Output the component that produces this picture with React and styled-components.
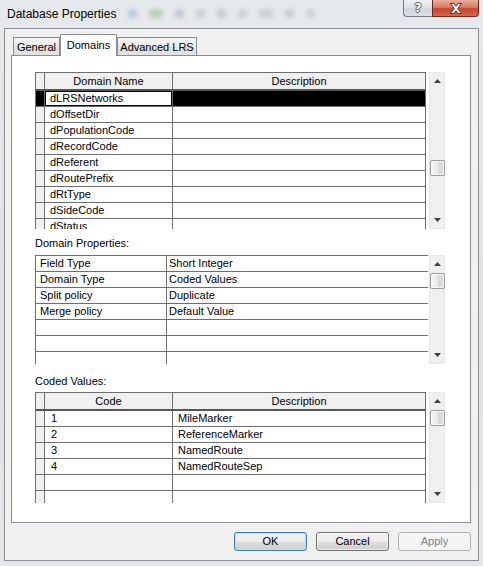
import React from 'react';
import styled, { createGlobalStyle, css } from 'styled-components';

const LINE = '#6e6e6e';

const Global = createGlobalStyle`
  html, body { margin: 0; padding: 0; }
  body {
    width: 483px; height: 566px; overflow: hidden;
    font-family: "Liberation Sans", Arial, sans-serif;
    background: #e2e6ea;
  }
`;

const Window = styled.div`
  width: 483px; height: 566px; box-sizing: border-box;
  display: flex; flex-direction: column;
  background: linear-gradient(180deg, #e6e9ec 0%, #dde2e7 60%, #e4e7ea 100%);
`;

const TitleBar = styled.div`
  height: 28px; flex: none; display: flex; align-items: flex-start;
  padding: 0 4px 0 7px; box-sizing: border-box;
`;

const Title = styled.div`
  font-size: 12px; line-height: 14px; padding-top: 7px; color: #000;
  white-space: nowrap;
`;

const Blurs = styled.div`
  flex: 1; display: flex; align-items: center; gap: 12px;
  padding: 9px 0 0 12px; opacity: 0.35; filter: blur(2px);
`;

const Blob = styled.span`
  width: ${p => p.$w || 9}px; height: 9px; border-radius: 3px;
  background: ${p => p.$c};
`;

const Caption = styled.div`
  display: flex; flex: none;
`;

const CapButton = styled.div`
  box-sizing: border-box; height: 17px; display: flex; align-items: center; justify-content: center;
  border: 1px solid;
  border-top: none;
  ${p => p.$close ? css`
    width: 47px; border-color: #6e2a1f; border-bottom-right-radius: 4px;
    background: linear-gradient(180deg, #eab0a0 0%, #dd7b63 45%, #c8452a 55%, #d36a4e 100%);
  ` : css`
    width: 29px; border-color: #6f7b88; border-right: none; border-bottom-left-radius: 4px;
    background: linear-gradient(180deg, #edf1f5 0%, #dde3e9 45%, #cdd5dd 55%, #d9e0e7 100%);
  `}
`;

const HelpGlyph = styled.span`
  font: bold 12px/12px "DejaVu Sans", sans-serif; color: #fff;
  text-shadow: 1px 0 0 #556, -1px 0 0 #556, 0 1px 0 #556, 0 -1px 0 #556;
`;

const Client = styled.div`
  flex: none; margin: 0 4px; height: 533px; box-sizing: border-box;
  border: 1px solid #8c9096; background: #f0f0f0;
  padding: 5px 7px 9px 6px;
  display: flex; flex-direction: column;
`;

const TabStrip = styled.div`
  height: 21px; display: flex; align-items: flex-end; padding-left: 2px; flex: none;
`;

const Tab = styled.div`
  box-sizing: border-box; width: ${p => p.$w}px;
  border: 1px solid #898c95; border-bottom: none;
  font-size: 11px; color: #000; display: flex; justify-content: center; align-items: center;
  white-space: nowrap;
  ${p => p.$active ? css`
    height: 22px; margin-bottom: -1px; background: #fff; position: relative; z-index: 1;
    padding-bottom: 2px; border-radius: 2px 2px 0 0;
  ` : css`
    height: 18px; background: linear-gradient(180deg, #f3f3f3 0%, #ebebeb 50%, #dedede 51%, #e3e3e3 100%);
  `}
`;

const Panel = styled.div`
  height: 468px; box-sizing: border-box; flex: none;
  border: 1px solid #898c95; background: #fff;
  padding: 16px 0 0 23px;
  display: flex; flex-direction: column;
`;

const GridArea = styled.div`
  width: 410px; height: ${p => p.$h}px; flex: none;
  display: flex; justify-content: space-between;
`;

const Grid = styled.div`
  box-sizing: border-box; width: ${p => p.$w}px; height: 100%; overflow: hidden;
  border-left: 1px solid ${LINE}; border-top: 1px solid ${LINE}; background: #fff;
`;

const GridLine = styled.div`
  display: grid; grid-template-columns: ${p => p.$cols};
  height: ${p => p.$h || 16}px;
`;

const Cell = styled.div`
  box-sizing: border-box; min-width: 0;
  border-right: ${p => p.$noRight ? 'none' : `1px solid ${LINE}`};
  border-bottom: 1px solid ${LINE};
  font-size: 11px; line-height: 15px; color: #000;
  padding-left: ${p => p.$pad ?? 5}px;
  white-space: nowrap; overflow: hidden;
  ${p => p.$selected && css`background: #000;`}
  ${p => p.$focus && css`box-shadow: inset 0 0 0 1px #000;`}
`;

const HeadCell = styled.div`
  box-sizing: border-box; min-width: 0;
  border-right: 1px solid ${LINE}; border-bottom: 2px solid #555;
  background: #f0f0f0;
  font-size: 11px; line-height: 16px; text-align: center; color: #000;
  white-space: nowrap; overflow: hidden;
`;

const RowHead = styled.div`
  box-sizing: border-box;
  border-right: 1px solid ${LINE}; border-bottom: 1px solid ${LINE};
  background: ${p => p.$selected ? '#000' : '#f0f0f0'};
`;

const Label = styled.div`
  font-size: 11px; line-height: 13px; color: #000;
  padding-top: ${p => p.$top}px; padding-bottom: ${p => p.$bottom}px; flex: none;
`;

const Scroll = styled.div`
  box-sizing: border-box; width: 16px; height: 100%;
  background: #efefef; border: 1px solid #e6e6e6;
  display: flex; flex-direction: column;
`;

const ArrowBox = styled.div`
  height: 16px; flex: none; display: flex; align-items: center; justify-content: center;
`;

const Track = styled.div`
  flex: 1; display: flex; flex-direction: column; align-items: center;
`;

const Thumb = styled.div`
  box-sizing: border-box; width: 15px; height: 16px; flex: none;
  margin-top: ${p => p.$offset}px;
  border: 1px solid #9b9b9b; border-radius: 2px;
  background: linear-gradient(90deg, #f5f5f5 0%, #e9e9e9 50%, #d9d9d9 51%, #dcdcdc 100%);
  box-shadow: inset 0 0 0 1px rgba(255,255,255,0.7);
`;

const ButtonRow = styled.div`
  display: flex; justify-content: flex-end; gap: 9px; margin-top: 9px; flex: none;
`;

const Button = styled.button`
  box-sizing: border-box; width: 73px; height: 19px; padding: 0;
  font: 11px/15px "Liberation Sans", Arial, sans-serif; color: #000;
  border: 1px solid #707070; border-radius: 3px;
  background: linear-gradient(180deg, #f2f2f2 0%, #ebebeb 50%, #dddddd 51%, #cfcfcf 100%);
  box-shadow: inset 0 0 0 1px rgba(255,255,255,0.6);
  ${p => p.$default && css`
    border-color: #3c7fb1;
    box-shadow: inset 0 0 0 1px #b7e0f7;
  `}
  ${p => p.$disabled && css`
    border-color: #adb2b5; color: #838383; background: #f4f4f4; box-shadow: none;
  `}
`;

const Arrow = ({ down }) => (
  <svg width="7" height="4" viewBox="0 0 7 4">
    <polygon points={down ? '0,0 7,0 3.5,4' : '3.5,0 7,4 0,4'} fill="#3e3e3e" />
  </svg>
);

const ScrollBar = ({ offset }) => (
  <Scroll>
    <ArrowBox><Arrow /></ArrowBox>
    <Track><Thumb $offset={offset} /></Track>
    <ArrowBox><Arrow down /></ArrowBox>
  </Scroll>
);

const CloseIcon = () => (
  <svg width="14" height="11" viewBox="0 0 14 11">
    <path d="M1.5 0.5 H4.8 L7 3.2 L9.2 0.5 H12.5 L8.8 5.5 L12.5 10.5 H9.2 L7 7.8 L4.8 10.5 H1.5 L5.2 5.5 Z"
      fill="#fff" stroke="#5a2a22" strokeWidth="1" strokeLinejoin="round" />
  </svg>
);

const DOMAIN_COLS = '9px 128px 1fr';
const domains = ['dLRSNetworks', 'dOffsetDir', 'dPopulationCode', 'dRecordCode', 'dReferent', 'dRoutePrefix', 'dRtType', 'dSideCode', 'dStatus'];
const props = [
  ['Field Type', 'Short Integer'],
  ['Domain Type', 'Coded Values'],
  ['Split policy', 'Duplicate'],
  ['Merge policy', 'Default Value'],
  ['', ''], ['', ''], ['', ''],
];
const coded = [['1', 'MileMarker'], ['2', 'ReferenceMarker'], ['3', 'NamedRoute'], ['4', 'NamedRouteSep'], ['', ''], ['', '']];

export default function App() {
  return (
    <>
      <Global />
      <Window>
        <TitleBar>
          <Title>Database Properties</Title>
          <Blurs>
            <Blob $c="#5b8fc9" /><Blob $c="#6aa35a" $w={14} /><Blob $c="#7a8aa0" />
            <Blob $c="#9aa4ae" /><Blob $c="#8b96a2" /><Blob $c="#a0a8b0" />
            <Blob $c="#9aa2aa" $w={14} /><Blob $c="#8f99a3" /><Blob $c="#a3abb3" />
          </Blurs>
          <Caption>
            <CapButton><HelpGlyph>?</HelpGlyph></CapButton>
            <CapButton $close><CloseIcon /></CapButton>
          </Caption>
        </TitleBar>
        <Client>
          <TabStrip>
            <Tab $w={47}>General</Tab>
            <Tab $w={57} $active>Domains</Tab>
            <Tab $w={80}>Advanced LRS</Tab>
          </TabStrip>
          <Panel>
            <GridArea $h={157}>
              <Grid $w={391}>
                <GridLine $cols={DOMAIN_COLS} $h={18}>
                  <HeadCell />
                  <HeadCell>Domain Name</HeadCell>
                  <HeadCell>Description</HeadCell>
                </GridLine>
                {domains.map((d, i) => (
                  <GridLine key={d} $cols={DOMAIN_COLS}>
                    <RowHead $selected={i === 0} />
                    <Cell $focus={i === 0}>{d}</Cell>
                    <Cell $selected={i === 0} />
                  </GridLine>
                ))}
              </Grid>
              <ScrollBar offset={71} />
            </GridArea>

            <Label $top={8} $bottom={5}>Domain Properties:</Label>
            <GridArea $h={109}>
              <Grid $w={393}>
                {props.map(([k, v], i) => (
                  <GridLine key={i} $cols="131px 1fr">
                    <Cell $pad={4}>{k}</Cell>
                    <Cell $pad={2} $noRight>{v}</Cell>
                  </GridLine>
                ))}
              </Grid>
              <ScrollBar offset={1} />
            </GridArea>

            <Label $top={11} $bottom={4}>Coded Values:</Label>
            <GridArea $h={111}>
              <Grid $w={391}>
                <GridLine $cols={DOMAIN_COLS} $h={18}>
                  <HeadCell />
                  <HeadCell>Code</HeadCell>
                  <HeadCell>Description</HeadCell>
                </GridLine>
                {coded.map(([c, d], i) => (
                  <GridLine key={i} $cols={DOMAIN_COLS}>
                    <RowHead />
                    <Cell $pad={6}>{c}</Cell>
                    <Cell>{d}</Cell>
                  </GridLine>
                ))}
              </Grid>
              <ScrollBar offset={1} />
            </GridArea>
          </Panel>
          <ButtonRow>
            <Button $default>OK</Button>
            <Button>Cancel</Button>
            <Button $disabled disabled>Apply</Button>
          </ButtonRow>
        </Client>
      </Window>
    </>
  );
}
